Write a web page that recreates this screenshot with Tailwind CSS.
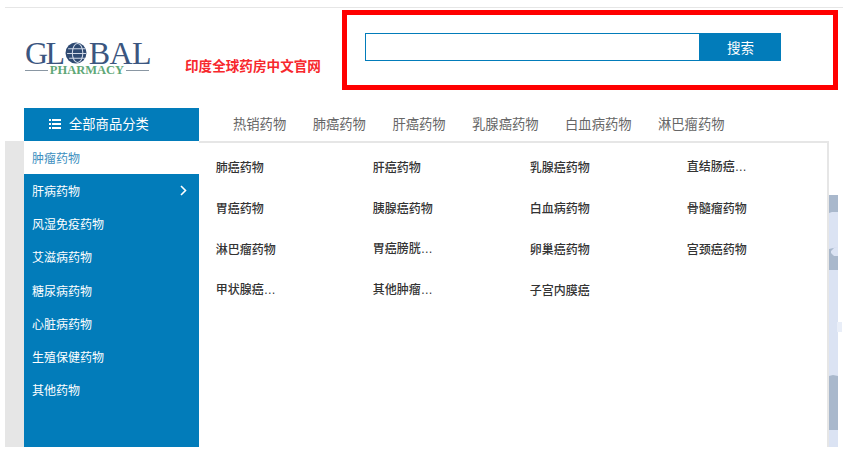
<!DOCTYPE html>
<html lang="zh-CN">
<head>
  <meta charset="UTF-8" />
  <title>印度全球药房中文官网</title>
  <script src="https://cdn.jsdelivr.net/npm/@tailwindcss/browser@4"></script>
</head>
<body class="bg-white h-[454px] overflow-hidden font-['Noto_Sans_CJK_SC','Liberation_Sans',sans-serif]">

  <div class="ml-[5px] w-[838px] pt-[7px]">

    <!-- Header -->
    <div class="border-t border-[#e6e6e6] h-[101px] flex items-start">
      <div class="ml-[20px] mt-[33px] w-[124px]">
        <div class="flex items-center justify-between h-[24px] text-[32px] leading-[24px] font-['Liberation_Serif',serif] text-[#3b5680]">
          <span class="w-[19px]">G</span><span class="w-[18px]">L</span>
          <svg class="shrink-0" width="22" height="22" viewBox="0 0 21 21" fill="none">
            <circle cx="10.5" cy="10.5" r="10" fill="#2f4a72"/>
            <ellipse cx="12" cy="10.5" rx="5" ry="9" stroke="#cfd8e6" stroke-width="1"/>
            <path d="M3 6.5h17M2 11h18M4 15.5h15" stroke="#cfd8e6" stroke-width="1"/>
          </svg>
          <span class="w-[19px]">B</span><span class="w-[21px]">A</span><span class="w-[17px]">L</span>
        </div>
        <div class="flex items-center gap-[2px] h-[11px]">
          <div class="flex-1 h-px bg-[#8a97a3]"></div>
          <span class="text-[12.5px] leading-[11px] font-bold font-['Liberation_Serif',serif] text-[#5fa777]">PHARMACY</span>
          <div class="flex-1 h-px bg-[#8a97a3]"></div>
        </div>
      </div>
      <div class="ml-[36px] mt-[48px] text-[13.6px] leading-[18px] font-bold text-[#f7282d]">印度全球药房中文官网</div>
      <div class="ml-auto mr-[5px] mt-[2px] w-[496px] h-[80px] border-[5px] border-[#ff0000] pl-[18px] pt-[18px]">
        <div class="flex w-[416px] h-[28px]">
          <input type="text" class="w-[335px] h-full bg-white border border-[#027cba] outline-none" />
          <button class="w-[81px] h-full bg-[#027cba] text-white text-[13.5px]">搜索</button>
        </div>
      </div>
    </div>

    <!-- Nav -->
    <div class="flex h-[33px] ml-[19px]">
      <div class="w-[175px] h-full pb-[2px] bg-[#027cba] text-white text-[13.3px] flex items-center pl-[25px] gap-[8px]">
        <svg width="12" height="10" viewBox="0 0 12 10" fill="#fff">
          <path d="M0 0h2v2H0zM3 0h9v2H3zM0 4h2v2H0zM3 4h9v2H3zM0 8h2v2H0zM3 8h9v2H3z"/>
        </svg>
        <span>全部商品分类</span>
      </div>
      <div class="flex items-center gap-[26.5px] pl-[34px] pb-[2px] text-[13.3px] text-[#666]">
        <a>热销药物</a>
        <a>肺癌药物</a>
        <a>肝癌药物</a>
        <a>乳腺癌药物</a>
        <a>白血病药物</a>
        <a>淋巴瘤药物</a>
      </div>
    </div>

    <!-- Main -->
    <div class="flex h-[306px]">
      <div class="w-[19px] bg-[#e6e6e6]"></div>

      <ul class="w-[175px] bg-[#027cba] text-white text-[12px]">
        <li class="h-[33px] flex items-center pl-[8px] bg-white text-[#3d8fc0]">肿瘤药物</li>
        <li class="h-[33.3px] flex items-center justify-between pl-[8px] pr-[12px]">
          <span>肝病药物</span>
          <svg width="7" height="11" viewBox="0 0 7 11" fill="none" stroke="#fff" stroke-width="1.6"><path d="M1 1l4.5 4.5L1 10"/></svg>
        </li>
        <li class="h-[33.3px] flex items-center pl-[8px]">风湿免疫药物</li>
        <li class="h-[33.3px] flex items-center pl-[8px]">艾滋病药物</li>
        <li class="h-[33.3px] flex items-center pl-[8px]">糖尿病药物</li>
        <li class="h-[33.3px] flex items-center pl-[8px]">心脏病药物</li>
        <li class="h-[33.3px] flex items-center pl-[8px]">生殖保健药物</li>
        <li class="h-[33.3px] flex items-center pl-[8px]">其他药物</li>
      </ul>

      <div class="w-[631px] bg-white border-t-2 border-r-2 border-[#e6e6e6] pl-[17px] pt-[3px]">
        <div class="grid grid-cols-[157px_157px_157px_100px] auto-rows-[41px] items-center text-[12px] font-medium text-[#333]">
          <a>肺癌药物</a><a>肝癌药物</a><a>乳腺癌药物</a><a>直结肠癌<span class="font-['Liberation_Sans']">…</span></a>
          <a>胃癌药物</a><a>胰腺癌药物</a><a>白血病药物</a><a>骨髓瘤药物</a>
          <a>淋巴瘤药物</a><a>胃癌膀胱<span class="font-['Liberation_Sans']">…</span></a><a>卵巢癌药物</a><a>宫颈癌药物</a>
          <a>甲状腺癌<span class="font-['Liberation_Sans']">…</span></a><a>其他肿瘤<span class="font-['Liberation_Sans']">…</span></a><a>子宫内膜癌</a>
        </div>
      </div>

      <!-- edge of the banner picture behind the menu -->
      <div class="w-[14px] mt-[54px]">
        <svg width="14" height="252" viewBox="0 0 14 252">
          <rect width="9" height="252" fill="#dbe3f3"/>
          <path d="M0 0h9v17H3l-3 1z" fill="#a9b8cc"/>
          <path d="M9 52l-4 1-3 3v2l3 3h4v14H0V54z" fill="#a9b8cc"/>
          <path d="M0 181l4-1 5 1v54H0z" fill="#a9b8cc"/>
          <rect x="8" y="127" width="5" height="10" fill="#e9eef8"/>
        </svg>
      </div>
    </div>
  </div>

</body>
</html>
